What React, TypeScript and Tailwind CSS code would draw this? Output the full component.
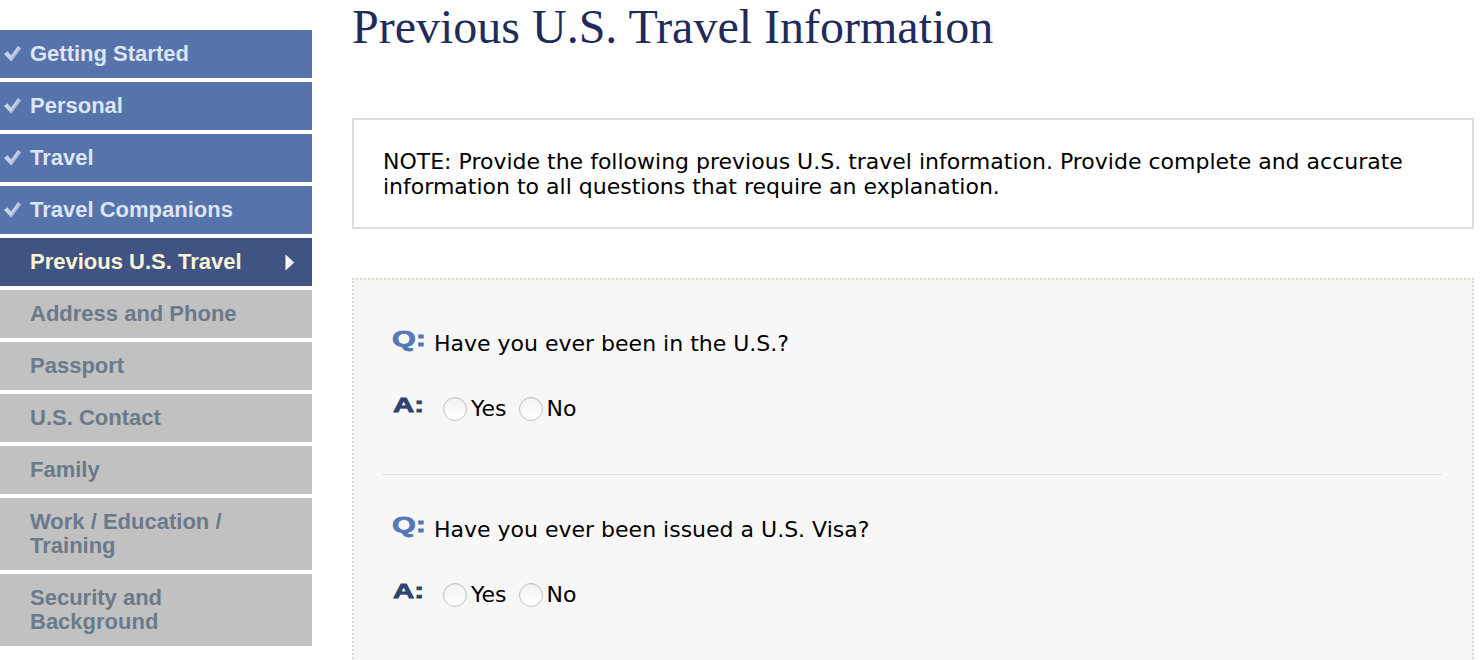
import React from "react";

const navItems = [
  { title: "Getting Started", state: "done" },
  { title: "Personal", state: "done" },
  { title: "Travel", state: "done" },
  { title: "Travel Companions", state: "done" },
  { title: "Previous U.S. Travel", state: "active" },
  { title: "Address and Phone", state: "todo" },
  { title: "Passport", state: "todo" },
  { title: "U.S. Contact", state: "todo" },
  { title: "Family", state: "todo" },
  { title: "Work / Education / Training", state: "todo" },
  { title: "Security and Background", state: "todo" },
];

const questions = [
  "Have you ever been in the U.S.?",
  "Have you ever been issued a U.S. Visa?",
];

const Check = () => (
  <svg width="17" height="16" viewBox="0 0 17 16" className="shrink-0">
    <path d="M0 8 L3.6 5.2 L7 9.4 L14 0 L17 2.4 L7.3 15.5 Z" fill="#c6d3ea" />
    <path d="M7.3 15.5 L17 2.4 L15.6 1.3 L7.1 13 Z" fill="#a8b9da" />
  </svg>
);

const Arrow = () => (
  <svg width="10" height="17" viewBox="0 0 10 17" className="shrink-0">
    <defs>
      <linearGradient id="arr" x1="0" y1="0" x2="1" y2="0">
        <stop offset="0" stopColor="#ffffff" />
        <stop offset="1" stopColor="#d9dde6" />
      </linearGradient>
    </defs>
    <path d="M0.5 0.5 L9.5 8.5 L0.5 16.5 Z" fill="url(#arr)" />
  </svg>
);

const NavItem = (props: (typeof navItems)[number]) => {
  if (props.state === "done") {
    return (
      <div className="flex items-center bg-[#5673ab] py-[12px] pl-[4px] pr-[50px] text-[22px] leading-[24px] font-bold text-[#dce5f4]">
        <Check />
        <span className="ml-[9px]">{props.title}</span>
      </div>
    );
  }
  if (props.state === "active") {
    return (
      <div className="flex items-center bg-[#3f5482] py-[12px] pl-[30px] pr-[17px] text-[22px] leading-[24px] font-bold text-[#fdf4d6]">
        <span>{props.title}</span>
        <span className="ml-auto flex">
          <Arrow />
        </span>
      </div>
    );
  }
  return (
    <div className="bg-[#c1c1c1] py-[12px] pl-[30px] pr-[50px] text-[22px] leading-[24px] font-bold text-[#6a7a8b]">
      {props.title}
    </div>
  );
};

const Radio = ({ label }: { label: string }) => (
  <label className="flex items-center">
    <span className="w-[24px] h-[24px] rounded-full border border-[#c2c2c2] bg-gradient-to-b from-[#f3f3f3] to-white shadow-[inset_0_1px_1px_rgba(0,0,0,0.06)]" />
    <span className="ml-[4px] mr-[12px] text-[22px] leading-[24px]">{label}</span>
  </label>
);

const QuestionItem = ({ text, last }: { text: string; last: boolean }) => (
  <div
    className={
      last
        ? "pt-[43px] pb-[53px]"
        : "pt-[43px] pb-[53px] border-b border-dotted border-[#c9c9c9]"
    }
  >
    <div className="flex items-start pl-[9px]">
      <span className="w-[42px] shrink-0 mt-[-3px] font-['Liberation_Sans',Arial,sans-serif] text-[22px] leading-[20px] font-bold text-[#5678b6] [-webkit-text-stroke:0.8px_#5678b6]">
        <span className="inline-block origin-left [transform:scaleX(1.39)]">Q:</span>
      </span>
      <span className="text-[22px] leading-[24px] text-black">{text}</span>
    </div>
    <div className="flex items-start pl-[10px] mt-[41px]">
      <span className="w-[41px] shrink-0 mt-[-2px] font-['Liberation_Sans',Arial,sans-serif] text-[20px] leading-[20px] font-bold text-[#2f4271] [-webkit-text-stroke:0.8px_#2f4271]">
        <span className="inline-block origin-left [transform:scaleX(1.47)]">A:</span>
      </span>
      <div className="flex items-center h-[24px] ml-[9px] text-black">
        <Radio label="Yes" />
        <Radio label="No" />
      </div>
    </div>
  </div>
);

const App = () => {
  return (
    <div className="flex items-start bg-white min-h-[660px] font-['Liberation_Sans',Arial,sans-serif]">
      <nav className="w-[312px] shrink-0 mt-[30px] flex flex-col gap-[4px]">
        {navItems.map((item) => (
          <NavItem key={item.title} {...item} />
        ))}
      </nav>

      <main className="flex-1 ml-[40px] mr-[8px] pt-[3px]">
        <h1 className="font-['Liberation_Serif','Times_New_Roman',serif] text-[48px] leading-[48px] font-normal text-[#1e2b5c]">
          Previous U.S. Travel Information
        </h1>

        <div className="mt-[67px] border-2 border-[#dddddd] pl-[29px] pr-[20px] pt-[29px] pb-[28px] font-['DejaVu_Sans',Verdana,sans-serif] text-[22px] leading-[25px] text-black">
          NOTE: Provide the following previous U.S. travel information. Provide
          complete and accurate information to all questions that require an
          explanation.
        </div>

        <div className="mt-[49px] border-2 border-dotted border-[#e0d9cb] bg-[#f7f7f7] pt-[9px] pl-[29px] pr-[31px] font-['DejaVu_Sans',Verdana,sans-serif]">
          {questions.map((q, i) => (
            <QuestionItem key={q} text={q} last={i === questions.length - 1} />
          ))}
        </div>
      </main>
    </div>
  );
};

export default App;
